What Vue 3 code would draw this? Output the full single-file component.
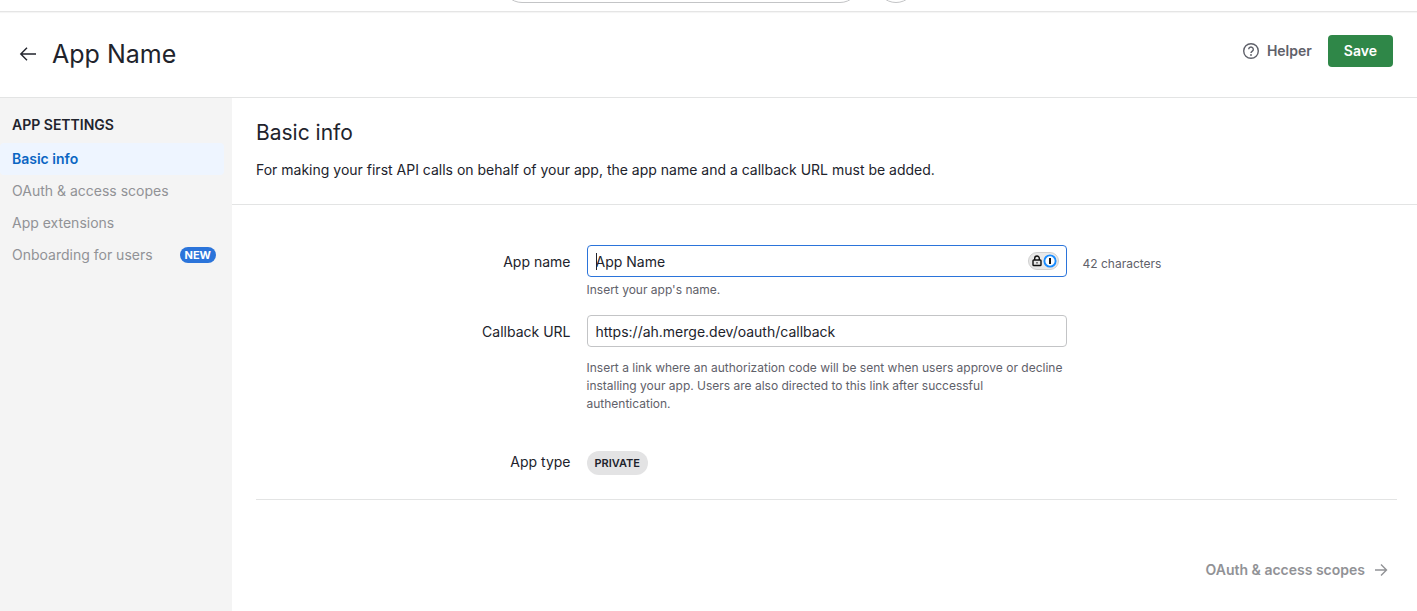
<script setup>
import { ref } from 'vue';

const appName = ref('App Name');
const callbackUrl = ref('https://ah.merge.dev/oauth/callback');
const charactersLeft = ref(42);
const active = ref('Basic info');
const menu = [
  { title: 'Basic info' },
  { title: 'OAuth & access scopes' },
  { title: 'App extensions' },
  { title: 'Onboarding for users', badge: 'NEW' }
];
</script>

<template>
  <div class="page">
    <div class="topbar">
      <div class="search"></div>
      <div class="add"></div>
    </div>

    <header class="header">
      <a class="back" href="#" aria-label="Back">
        <svg width="18" height="16" viewBox="0 0 18 16">
          <path d="M17 8H1.8M8 1.8L1.8 8L8 14.2" />
        </svg>
      </a>
      <h1>{{ appName }}</h1>
      <button type="button" class="helper">
        <svg width="16" height="16" viewBox="0 0 16 16">
          <circle cx="8" cy="8" r="7.3" />
          <path d="M5.7 6.3a2.3 2.3 0 1 1 3.6 1.9C8.4 8.8 8 9.1 8 10" />
          <circle class="dot" cx="8" cy="12" r="0.9" />
        </svg>
        Helper
      </button>
      <button type="button" class="save">Save</button>
    </header>

    <div class="body">
      <nav class="sidebar">
        <h3>APP SETTINGS</h3>
        <a v-for="item in menu" :key="item.title" href="#" :class="{ active: item.title === active }"
          @click.prevent="active = item.title">
          {{ item.title }}
          <span v-if="item.badge" class="new">{{ item.badge }}</span>
        </a>
      </nav>

      <main class="main">
        <div class="intro">
          <h2>Basic info</h2>
          <p>For making your first API calls on behalf of your app, the app name and a callback URL must be added.</p>
        </div>

        <form class="form" @submit.prevent>
          <div class="row">
            <label for="appName">App name</label>
            <div class="field">
              <div class="inputWrap">
                <input id="appName" v-model="appName" class="focused" type="text" />
                <span class="caret"></span>
                <svg class="manager" width="31" height="18" viewBox="0 0 31 18">
                  <rect x="0.5" y="0.5" width="30" height="17" rx="8.5" fill="#e8e8e8" stroke="#cfcfcf" />
                  <rect x="5" y="8" width="8" height="5.5" rx="0.8" fill="#e8e8e8" stroke="#111" stroke-width="1.4" />
                  <path d="M6.7 8V6.3a2.3 2.3 0 0 1 4.6 0V8" fill="none" stroke="#111" stroke-width="1.4" />
                  <path d="M9 10v1.6" stroke="#111" />
                  <circle cx="22" cy="9" r="5.6" fill="#fff" stroke="#1a8cff" stroke-width="1.9" />
                  <path d="M22 6v6" stroke="#111" stroke-width="2" />
                </svg>
              </div>
              <p class="hint">Insert your app's name.</p>
            </div>
            <span class="count">{{ charactersLeft }} characters</span>
          </div>

          <div class="row">
            <label for="callbackUrl">Callback URL</label>
            <div class="field">
              <input id="callbackUrl" v-model="callbackUrl" type="text" />
              <p class="hint long">Insert a link where an authorization code will be sent when users approve or decline
                installing your app. Users are also directed to this link after successful authentication.</p>
            </div>
          </div>

          <div class="row type">
            <span class="label">App type</span>
            <div class="field">
              <span class="private">PRIVATE</span>
            </div>
          </div>
        </form>

        <div class="next">
          <a href="#">
            OAuth &amp; access scopes
            <svg width="14" height="14" viewBox="0 0 14 14">
              <path d="M1 7h11.5M7 1.5L12.5 7L7 12.5" />
            </svg>
          </a>
        </div>
      </main>
    </div>
  </div>
</template>

<style>
body {
  margin: 0;
}
</style>

<style scoped>
* {
  box-sizing: border-box;
}

.page {
  display: flex;
  flex-direction: column;
  min-height: 100vh;
  background-color: #fff;
  color: #21232c;
  font-family: Inter, "Liberation Sans", sans-serif;
  font-size: 14px;
  line-height: 20px;
}

h1,
h2,
h3,
p {
  margin: 0;
  font-weight: 400;
}

a {
  color: inherit;
  text-decoration: none;
}

button,
input {
  font: inherit;
  color: inherit;
}

.topbar {
  display: flex;
  justify-content: center;
  align-items: flex-end;
  gap: 16px;
  height: 12px;
  padding-bottom: 8px;
  overflow: hidden;
  border-bottom: 1px solid #e5e5e5;
  box-shadow: 0 1px 1px #f5f5f5;
}

.search,
.add {
  flex-shrink: 0;
  width: 40px;
  height: 40px;
  border: 1px solid #c3c4c6;
  border-radius: 20px;
}

.search {
  width: 358px;
}

.header {
  display: flex;
  align-items: center;
  height: 86px;
  padding: 0 24px 2px 19px;
  border-bottom: 1px solid #e3e4e4;
}

.back {
  display: flex;
}

.back svg,
.helper svg,
.next svg {
  fill: none;
  stroke: currentColor;
  stroke-width: 1.4;
}

h1 {
  flex: 1;
  padding-left: 15px;
  font-size: 25px;
  line-height: 32px;
}

.helper {
  display: flex;
  align-items: center;
  gap: 8px;
  margin: 0 16px 6px 0;
  padding: 0;
  border: 0;
  background: none;
  color: #5f616a;
  font-weight: 600;
}

.helper .dot {
  fill: currentColor;
  stroke: none;
}

.save {
  height: 32px;
  margin-bottom: 6px;
  padding: 0 16px;
  border: 0;
  border-radius: 4px;
  background-color: #2f8748;
  color: #fff;
  font-weight: 600;
}

.body {
  display: flex;
  flex: 1;
}

.sidebar {
  flex-shrink: 0;
  width: 232px;
  padding: 17px 8px 0 0;
  background-color: #f4f4f4;
}

.sidebar h3 {
  padding: 0 12px 8px;
  font-size: 14px;
  font-weight: 600;
}

.sidebar a {
  display: flex;
  align-items: center;
  justify-content: space-between;
  height: 32px;
  padding: 0 8px 0 12px;
  border-radius: 4px;
  color: #919296;
}

.sidebar a.active {
  background-color: #eef5ff;
  color: #0b66c3;
  font-weight: 600;
}

.new {
  padding: 0 5px;
  border-radius: 8px;
  background-color: #2b74da;
  color: #fff;
  font-size: 11px;
  font-weight: 700;
  line-height: 16px;
}

.main {
  flex: 1;
  min-width: 0;
}

.intro {
  padding: 21px 24px 24px;
  border-bottom: 1px solid #e3e4e4;
}

h2 {
  padding-bottom: 13px;
  font-size: 21px;
  line-height: 28px;
}

.form {
  margin: 0 20px 0 24px;
  padding: 40px 0 24px;
  border-bottom: 1px solid #e3e4e4;
}

.row {
  display: grid;
  grid-template-columns: 1fr minmax(0, 480px) 1fr;
  column-gap: 16px;
  margin-bottom: 16px;
}

.row label,
.row .label {
  padding-top: 7px;
  text-align: right;
}

.inputWrap {
  position: relative;
}

input {
  display: block;
  width: 100%;
  height: 32px;
  padding: 0 8px;
  border: 1px solid #c3c4c6;
  border-radius: 4px;
  background-color: #fff;
  outline: none;
}

input.focused {
  border-color: #2b74da;
}

.caret {
  position: absolute;
  top: 8px;
  left: 9px;
  width: 1px;
  height: 17px;
  background-color: #21232c;
}

.manager {
  position: absolute;
  top: 7px;
  right: 8px;
}

.hint,
.count {
  color: #5f616a;
  font-size: 12px;
  line-height: 18px;
}

.hint {
  padding-top: 4px;
}

.hint.long {
  padding-top: 12px;
}

.count {
  padding-top: 10px;
}

.row.type {
  margin: 38px 0 0;
}

.row.type .label {
  padding-top: 1px;
}

.private {
  display: inline-block;
  padding: 0 8px;
  border-radius: 12px;
  background-color: #e3e3e4;
  font-size: 11px;
  font-weight: 600;
  line-height: 24px;
}

.field {
  min-width: 0;
}

.row.type .field {
  display: flex;
}

.next {
  display: flex;
  justify-content: flex-end;
  padding: 60px 29px 24px;
}

.next a {
  display: flex;
  align-items: center;
  gap: 9px;
  color: #919296;
  font-weight: 600;
}
</style>
